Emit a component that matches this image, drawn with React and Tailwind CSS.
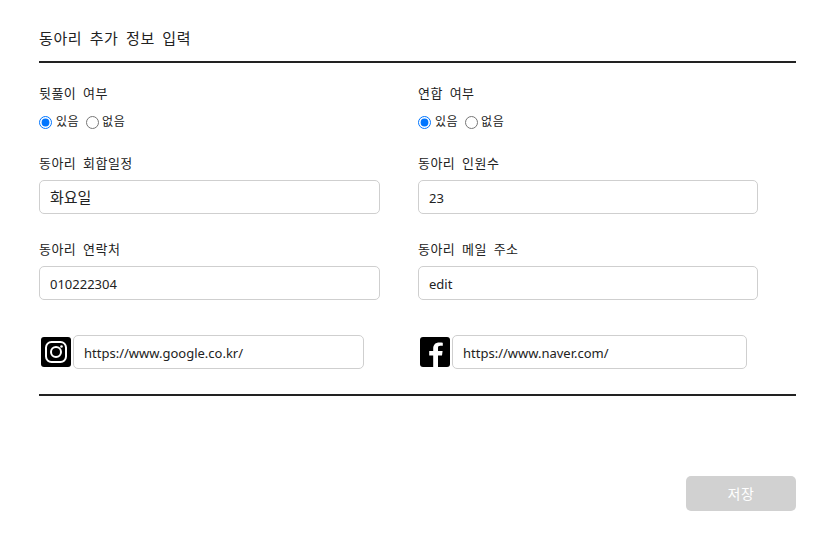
const fieldClass =
  "block h-[34px] w-full rounded-[5px] border border-[#cfcfcf] bg-white px-[10px] text-[13px] text-[#222] outline-none";

const labelClass = "h-[19px] text-[13px] leading-[19px] tracking-[0.45px] [word-spacing:3px] text-[#222]";

const RadioGroup = ({ name }) => (
  <div className="mt-[10px] flex h-[18px] items-center text-[12px] tracking-[0.5px] text-[#222]">
    <input type="radio" name={name} defaultChecked className="m-0 h-[13px] w-[13px]" />
    <span className="ml-[4px]">있음</span>
    <input type="radio" name={name} className="m-0 ml-[7px] h-[13px] w-[13px]" />
    <span className="ml-[3px]">없음</span>
  </div>
);

const Field = ({ label, value, className, inputClass }) => (
  <div className={className}>
    <div className={labelClass}>{label}</div>
    <input type="text" defaultValue={value} className={`mt-[7px] ${fieldClass} ${inputClass}`} />
  </div>
);

const InstagramIcon = () => (
  <svg width="30" height="30" viewBox="0 0 30 30" className="shrink-0">
    <rect width="30" height="30" rx="3" fill="#000" />
    <rect x="5" y="5" width="20" height="20" rx="5.5" fill="none" stroke="#fff" strokeWidth="2" />
    <circle cx="15" cy="15" r="5" fill="none" stroke="#fff" strokeWidth="2" />
    <circle cx="20.500" cy="9.500" r="1.300" fill="#fff" />
  </svg>
);

const FacebookIcon = () => (
  <svg width="30" height="30" viewBox="0 0 30 30" className="shrink-0">
    <rect width="30" height="30" rx="3" fill="#000" />
    <path
      d="M18 30V18.500h4l.6-4.500H18v-3c0-1.400.4-2.300 2.300-2.300h2.500V5.800c-.5-.1-1.900-.2-3.600-.2-3.500 0-6 2.100-6 6v2.400H9.200v4.500h4V30z"
      fill="#fff"
    />
  </svg>
);

const App = () => {
  return (
    <div
      className="h-[545px] w-[826px] bg-white pl-[39px] pr-[30px] pt-[28px]"
      style={{ fontFamily: '"Noto Sans", "Noto Sans CJK KR", sans-serif' }}
    >
      <div className="h-[35px] border-b-2 border-[#222] text-[15px] leading-[20px] tracking-[0.6px] [word-spacing:3px] text-[#222]">
        동아리 추가 정보 입력
      </div>

      <div className="mt-[21px] flex">
        <div className="w-[379px]">
          <div className={labelClass}>뒷풀이 여부</div>
          <RadioGroup name="afterparty" />
        </div>
        <div>
          <div className={labelClass}>연합 여부</div>
          <RadioGroup name="union" />
        </div>
      </div>

      <div className="mt-[23px] flex">
        <Field label="동아리 회합일정" value="화요일" className="w-[341px]" inputClass="pb-[2px] text-[15px]" />
        <Field label="동아리 인원수" value="23" className="ml-[38px] w-[340px]" inputClass="pt-[2px]" />
      </div>

      <div className="mt-[26px] flex">
        <Field label="동아리 연락처" value="010222304" className="w-[341px]" inputClass="pt-[2px]" />
        <Field label="동아리 메일 주소" value="edit" className="ml-[38px] w-[340px]" inputClass="pt-[2px]" />
      </div>

      <div className="mt-[35px] flex">
        <div className="flex w-[379px] items-center">
          <div className="ml-[2px] flex">
            <InstagramIcon />
          </div>
          <input type="text" defaultValue="https://www.google.co.kr/" className={`ml-[2px] !w-[291px] pt-[2px] ${fieldClass}`} />
        </div>
        <div className="flex items-center">
          <div className="ml-[2px] flex">
            <FacebookIcon />
          </div>
          <input type="text" defaultValue="https://www.naver.com/" className={`ml-[2px] !w-[295px] pt-[2px] ${fieldClass}`} />
        </div>
      </div>

      <div className="mt-[25px] h-[2px] bg-[#222]" />

      <div className="mt-[80px] flex justify-end">
        <button className="h-[35px] w-[110px] rounded-[5px] bg-[#d1d1d1] text-[14px] tracking-[0.5px] text-white">저장</button>
      </div>
    </div>
  );
};

export default App;
